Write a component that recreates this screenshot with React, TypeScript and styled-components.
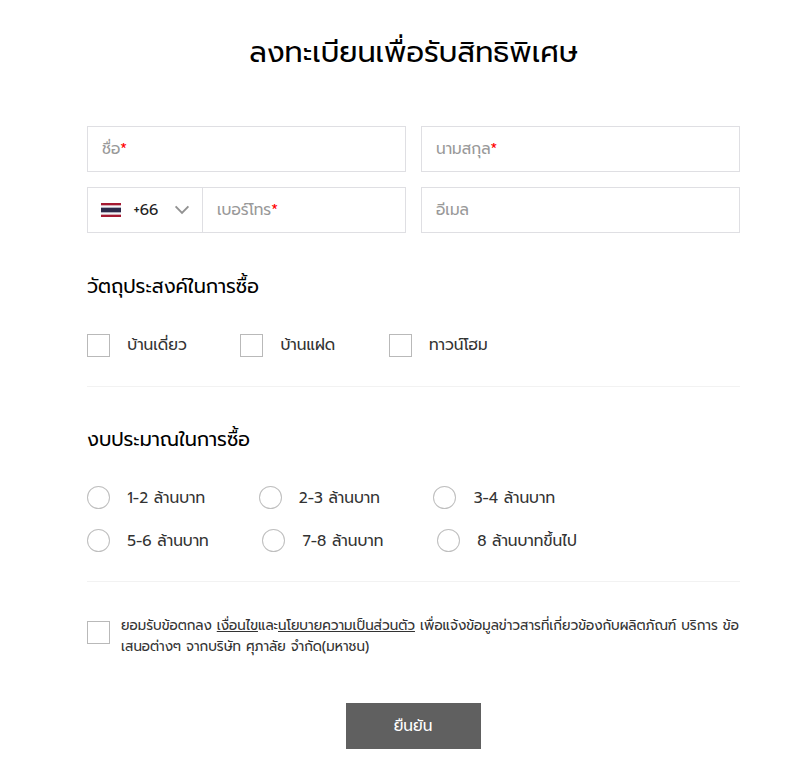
import React from 'react';
import styled, { createGlobalStyle } from 'styled-components';

const GlobalStyle = createGlobalStyle`
  *, *::before, *::after { box-sizing: border-box; }
  body {
    margin: 0;
    background: #fff;
    color: #333;
    font-family: Prompt, "Noto Sans Thai", "Noto Sans", sans-serif;
    font-size: 15.36px;
    font-weight: 400;
  }
`;

const Form = styled.form`
  width: 653px;
  margin-left: 87px;
  padding-top: 31px;
  display: flex;
  flex-direction: column;
`;

const Title = styled.h1`
  margin: 0 0 51px;
  height: 44px;
  line-height: 44px;
  font-size: 28.8px;
  font-weight: 400;
  color: #000;
  text-align: center;
  white-space: nowrap;
`;

const Fields = styled.div`
  display: grid;
  grid-template-columns: 319px 319px;
  grid-auto-rows: 46px;
  gap: 15px;
`;

const Field = styled.label`
  display: flex;
  align-items: center;
  border: 1px solid #dfdfe3;
  padding: 0 14px 1px;
  color: #999;
`;

const Required = styled.span`
  color: #f00;
`;

const PhoneGroup = styled.div`
  display: grid;
  grid-template-columns: 116px 1fr;
  & > ${Field} { border-left: 0; }
`;

const CountrySelect = styled.div`
  display: flex;
  align-items: center;
  border: 1px solid #dfdfe3;
  padding: 0 12px 0 13.4px;
  color: #222;
`;

const DialCode = styled.span`
  margin-left: 12px;
  margin-right: auto;
  padding-bottom: 2px;
`;

const Section = styled.section<{ $height: number; $top: number }>`
  height: ${(p) => p.$height}px;
  padding-top: ${(p) => p.$top}px;
  border-bottom: 1px solid #f2f2f2;
`;

const SectionTitle = styled.h2`
  margin: 0;
  height: 30px;
  line-height: 30px;
  font-size: 19.2px;
  font-weight: 400;
  color: #000;
`;

const OptionRow = styled.div<{ $top: number; $lift?: number }>`
  display: flex;
  gap: 53.4px;
  margin-top: ${(p) => p.$top}px;
  line-height: ${(p) => 23 - 2 * (p.$lift ?? 0)}px;
`;

const Option = styled.label`
  display: flex;
  align-items: flex-start;
  gap: 17.28px;
  height: 23px;
  white-space: nowrap;
`;

const Box = styled.span<{ $round?: boolean }>`
  flex: none;
  width: 23.04px;
  height: 23px;
  border: 1px solid ${(p) => (p.$round ? '#bfbfbf' : '#b9b9b9')};
  border-radius: ${(p) => (p.$round ? '50%' : '0')};
`;

const Consent = styled.div`
  display: flex;
  align-items: flex-start;
  gap: 11px;
  margin-top: 34px;
  height: 41px;
  font-size: 13.44px;
  line-height: 20.5px;
  & > ${Box} { margin-top: 5px; }
`;

const ConsentText = styled.p`
  margin: 0;
  white-space: nowrap;
`;

const Policy = styled.span`
  text-decoration: underline;
`;

const Submit = styled.button`
  align-self: center;
  width: 135px;
  height: 46px;
  margin-top: 46px;
  padding: 0 1px 1px 0;
  border: 0;
  background: #606060;
  color: #fff;
  font: inherit;
`;

const Flag = () => (
  <svg width="20" height="14" viewBox="0 0 20 14">
    <path fill="#a51931" d="M0 0h20v14H0z" />
    <path fill="#f4f5f8" d="M0 2.33h20v9.34H0z" />
    <path fill="#2d2a4a" d="M0 4.67h20v4.66H0z" />
  </svg>
);

const Chevron = () => (
  <svg width="16" height="10" viewBox="0 0 16 10" fill="none" stroke="#929292" strokeWidth="1.9">
    <path d="M1.6 1.4 8 8l6.4-6.6" />
  </svg>
);

const purposes = ['บ้านเดี่ยว', 'บ้านแฝด', 'ทาวน์โฮม'];
const budgets = [
  ['1-2 ล้านบาท', '2-3 ล้านบาท', '3-4 ล้านบาท'],
  ['5-6 ล้านบาท', '7-8 ล้านบาท', '8 ล้านบาทขึ้นไป'],
];

export default function App() {
  return (
    <>
      <GlobalStyle />
      <Form>
        <Title>ลงทะเบียนเพื่อรับสิทธิพิเศษ</Title>
        <Fields>
          <Field>ชื่อ<Required>*</Required></Field>
          <Field>นามสกุล<Required>*</Required></Field>
          <PhoneGroup>
            <CountrySelect>
              <Flag />
              <DialCode>+66</DialCode>
              <Chevron />
            </CountrySelect>
            <Field>เบอร์โทร<Required>*</Required></Field>
          </PhoneGroup>
          <Field>อีเมล</Field>
        </Fields>
        <Section $height={154} $top={39}>
          <SectionTitle>วัตถุประสงค์ในการซื้อ</SectionTitle>
          <OptionRow $top={32} $lift={1}>
            {purposes.map((label) => (
              <Option key={label}><Box />{label}</Option>
            ))}
          </OptionRow>
        </Section>
        <Section $height={195} $top={38}>
          <SectionTitle>งบประมาณในการซื้อ</SectionTitle>
          {budgets.map((row, i) => (
            <OptionRow key={row[0]} $top={i === 0 ? 31 : 20}>
              {row.map((label) => (
                <Option key={label}><Box $round />{label}</Option>
              ))}
            </OptionRow>
          ))}
        </Section>
        <Consent>
          <Box />
          <ConsentText>
            ยอมรับข้อตกลง <Policy>เงื่อนไข</Policy>และ<Policy>นโยบายความเป็นส่วนตัว</Policy> เพื่อแจ้งข้อมูลข่าวสารที่เกี่ยวข้องกับผลิตภัณฑ์ บริการ ข้อ
            <br />
            เสนอต่างๆ จากบริษัท ศุภาลัย จำกัด(มหาชน)
          </ConsentText>
        </Consent>
        <Submit type="button">ยืนยัน</Submit>
      </Form>
    </>
  );
}
